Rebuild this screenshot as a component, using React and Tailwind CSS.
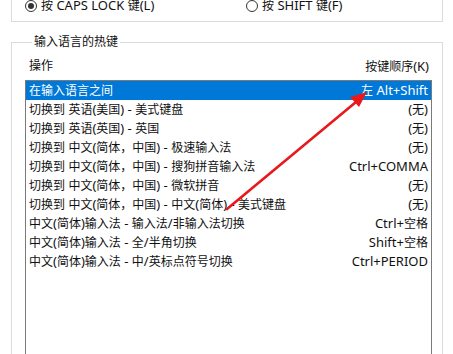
import React from "react";

const rows = [
  { label: "在输入语言之间", keys: "左 Alt+Shift", selected: true },
  { label: "切换到 英语(美国) - 美式键盘", keys: "(无)" },
  { label: "切换到 英语(英国) - 英国", keys: "(无)" },
  { label: "切换到 中文(简体，中国) - 极速输入法", keys: "(无)" },
  { label: "切换到 中文(简体，中国) - 搜狗拼音输入法", keys: "Ctrl+COMMA" },
  { label: "切换到 中文(简体，中国) - 微软拼音", keys: "(无)" },
  { label: "切换到 中文(简体，中国) - 中文(简体) - 美式键盘", keys: "(无)" },
  { label: "中文(简体)输入法 - 输入法/非输入法切换", keys: "Ctrl+空格" },
  { label: "中文(简体)输入法 - 全/半角切换", keys: "Shift+空格" },
  { label: "中文(简体)输入法 - 中/英标点符号切换", keys: "Ctrl+PERIOD" },
];

// latin runs get a slightly bigger size so they are as wide as the Segoe UI ones
const Txt = ({ children }) => {
  const parts = children.split(/([\u0000-\u024f]+)/).filter(Boolean);
  return (
    <span>
      {parts.map((p, i) =>
        /^[\u0000-\u024f]+$/.test(p) ? (
          <span key={i} className="text-[13px]">
            {p}
          </span>
        ) : (
          <span key={i}>{p}</span>
        )
      )}
    </span>
  );
};

const Radio = ({ checked, label }) => (
  <div className="flex items-center gap-[4px]">
    <span className="w-[12px] h-[12px] rounded-full border border-[#333] flex items-center justify-center">
      {checked && <span className="w-[6px] h-[6px] rounded-full bg-[#333]" />}
    </span>
    <Txt>{label}</Txt>
  </div>
);

export default function App() {
  return (
    <div
      className="relative w-[453px] h-[354px] overflow-hidden bg-white text-[12px] leading-[16px] text-[#111] pl-[11px] pr-[10px]"
      style={{ fontFamily: '"Noto Sans", "Noto Sans CJK SC", sans-serif' }}
    >
      {/* top group, cut off by the crop */}
      <div className="h-[25px] border-x border-b border-[#dcdcdc] -mt-[1px]">
        <div className="flex -mt-[3px] pl-[13px]">
          <div className="w-[221px]">
            <Radio checked label="按 CAPS LOCK 键(L)" />
          </div>
          <Radio label="按 SHIFT 键(F)" />
        </div>
      </div>

      <fieldset className="mt-[12px] border border-[#dcdcdc] h-[340px] pl-[13px] pr-[10px]">
        <legend className="ml-[7px] px-[2px]">输入语言的热键</legend>
        <div className="flex justify-between items-center h-[16px] mt-[8px] pl-[4px] pr-[3px]">
          <span>操作</span>
          <Txt>按键顺序(K)</Txt>
        </div>
        <div className="mt-[6px] border border-[#7a7a7a] h-[300px]">
          {rows.map((r) => (
            <div
              key={r.label}
              className={`flex justify-between items-center h-[19px] pl-[3px] pr-[3px] whitespace-nowrap ${
                r.selected ? "bg-[#0078d7] text-white" : ""
              }`}
            >
              <Txt>{r.label}</Txt>
              <Txt>{r.keys}</Txt>
            </div>
          ))}
        </div>
      </fieldset>

      {/* red annotation arrow */}
      <svg className="absolute left-0 top-0 pointer-events-none" width="453" height="354">
        <line x1="227" y1="209" x2="356" y2="102" stroke="#e8191c" strokeWidth="2.6" strokeLinecap="round" />
        <polygon points="367,92 359,107 350,97" fill="#e8191c" />
      </svg>
    </div>
  );
}
